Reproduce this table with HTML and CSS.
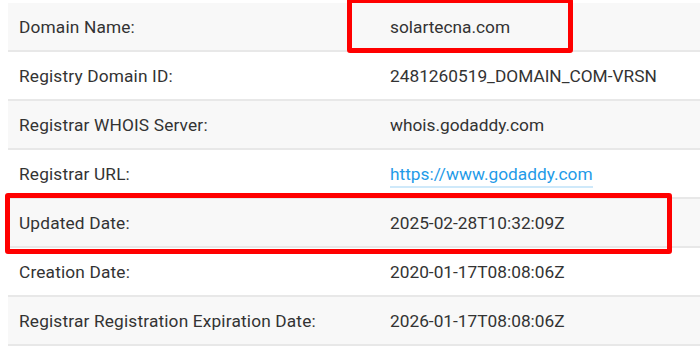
FILE: index.html
```html
<!DOCTYPE html>
<html>
<head>
<meta charset="utf-8">
<link rel="stylesheet" href="styles.css">
</head>
<body>
<div class="page">
  <table class="whois">
    <tbody>
      <tr><td class="label">Domain Name:</td><td class="value">solartecna.com</td></tr>
      <tr><td class="label">Registry Domain ID:</td><td class="value">2481260519_DOMAIN_COM-VRSN</td></tr>
      <tr><td class="label">Registrar WHOIS Server:</td><td class="value">whois.godaddy.com</td></tr>
      <tr><td class="label">Registrar URL:</td><td class="value"><a class="link" href="#">https://www.godaddy.com</a></td></tr>
      <tr><td class="label">Updated Date:</td><td class="value">2025-02-28T10:32:09Z</td></tr>
      <tr><td class="label">Creation Date:</td><td class="value">2020-01-17T08:08:06Z</td></tr>
      <tr><td class="label">Registrar Registration Expiration Date:</td><td class="value">2026-01-17T08:08:06Z</td></tr>
    </tbody>
  </table>
  <div class="mark mark-domain"></div>
  <div class="mark mark-updated"></div>
</div>
</body>
</html>
```
FILE: styles.css
```css
html, body {
  margin: 0;
  padding: 0;
  background: #fff;
  overflow: hidden;
}
.page {
  position: relative;
  padding: 3px 0 0 8px;
  width: 720px;
  font-family: Roboto, "Liberation Sans", sans-serif;
  font-size: 17.3px;
  color: #333;
}
.whois {
  border-collapse: collapse;
  width: 712px;
}
.whois tr {
  border-bottom: 2px solid #e8e8e8;
}
.whois tr:nth-child(odd) {
  background: #f8f8f8;
}
.whois td {
  height: 47px;
  padding: 0 11px;
  vertical-align: middle;
  white-space: nowrap;
}
.whois td.label {
  width: 349px;
  letter-spacing: 0.16px;
}
.link {
  color: #1f9be8;
  text-decoration: none;
  border-bottom: 2px solid #cfe9fa;
  padding-bottom: 2px;
}
.mark {
  position: absolute;
  border: 5px solid #ff0000;
  border-radius: 3px;
  box-sizing: border-box;
}
.mark-domain {
  left: 347px;
  top: -2px;
  width: 226px;
  height: 55px;
}
.mark-updated {
  left: 5px;
  top: 193px;
  width: 667px;
  height: 61px;
}
```
